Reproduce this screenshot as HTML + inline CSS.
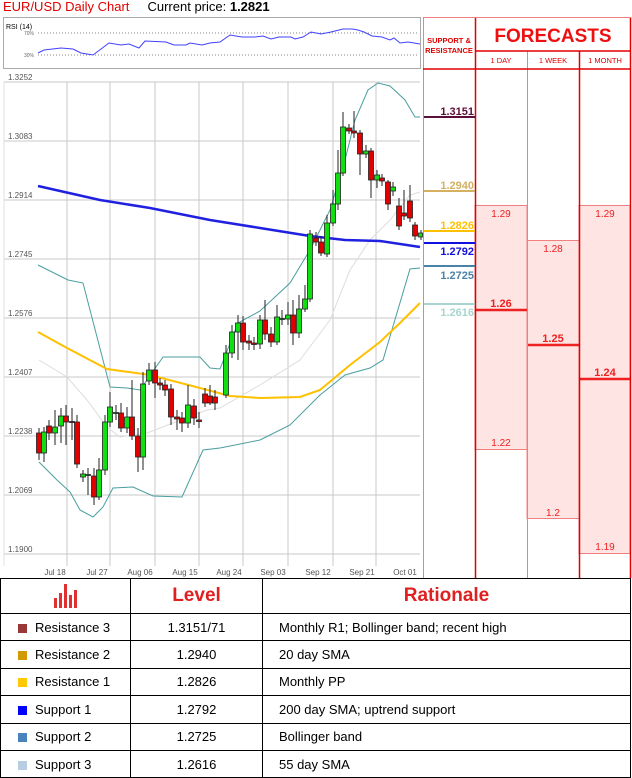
<!DOCTYPE html>
<html><head><meta charset="utf-8">
<style>
body{margin:0;width:632px;height:778px;background:#fff;font-family:"Liberation Sans",sans-serif;position:relative;overflow:hidden}
.t{position:absolute;top:-1px;left:3px;font-size:13px;white-space:nowrap}
table{position:absolute;left:0;top:578px;width:631px;border-collapse:collapse;font-size:13px;table-layout:fixed}
td{border:1.5px solid #000;height:27.4px;padding:0;box-sizing:border-box;white-space:nowrap}
td.h{height:35px;color:#e02020;font-weight:bold;font-size:19px;text-align:center}
.c1{padding-left:17px}
.c2{text-align:center}
.c3{padding-left:16px}
.sq{display:inline-block;width:9px;height:9px;margin-right:8px;vertical-align:-1px}
</style></head><body>
<div class="t"><span style="color:#e00000">EUR/USD Daily Chart</span>&nbsp;&nbsp;&nbsp;&nbsp; Current price: <b>1.2821</b></div>
<svg width="632" height="578" style="position:absolute;left:0;top:0" font-family="Liberation Sans, sans-serif">
<rect x="3.5" y="17.5" width="417" height="51" fill="#fff" stroke="#aaa"/>
<text x="6" y="29" font-size="7" fill="#000">RSI (14)</text>
<line x1="38" y1="33" x2="418" y2="33" stroke="#888" stroke-dasharray="1,2"/>
<line x1="38" y1="55" x2="418" y2="55" stroke="#888" stroke-dasharray="1,2"/>
<text x="24" y="35" font-size="5" fill="#666">70%</text>
<text x="24" y="57" font-size="5" fill="#666">30%</text>
<polyline fill="none" stroke="#4040ff" stroke-width="1" points="38,53 44,50 61,48 73,49 81,53 93,55 109,43 121,45 129,44 139,48 145,41 166,42 174,45 186,45 190,43 202,45 210,43 220,42 230,35 242,37 255,37 263,36 271,39 279,37 291,37 295,39 303,37 311,32 321,34 331,32 343,29 352,29 358,30 364,32 372,36 382,37 390,40 394,38 400,43 408,42 420,44"/>
<g stroke="#c8c8c8" stroke-width="1">
<line x1="4" y1="82" x2="420" y2="82"/><line x1="4" y1="141" x2="420" y2="141"/><line x1="4" y1="200" x2="420" y2="200"/><line x1="4" y1="259" x2="420" y2="259"/><line x1="4" y1="318" x2="420" y2="318"/><line x1="4" y1="377" x2="420" y2="377"/><line x1="4" y1="436" x2="420" y2="436"/><line x1="4" y1="495" x2="420" y2="495"/><line x1="4" y1="554" x2="420" y2="554"/>
<line x1="67" y1="82" x2="67" y2="566"/><line x1="110" y1="82" x2="110" y2="566"/><line x1="155" y1="82" x2="155" y2="566"/><line x1="199" y1="82" x2="199" y2="566"/><line x1="243" y1="82" x2="243" y2="566"/><line x1="288" y1="82" x2="288" y2="566"/><line x1="333" y1="82" x2="333" y2="566"/><line x1="376" y1="82" x2="376" y2="566"/>
<line x1="4" y1="82" x2="4" y2="566" stroke="#e0e0e0"/>
</g>
<g font-size="8" fill="#555">
<text x="8" y="80">1.3252</text><text x="8" y="139">1.3083</text><text x="8" y="198">1.2914</text><text x="8" y="257">1.2745</text><text x="8" y="316">1.2576</text><text x="8" y="375">1.2407</text><text x="8" y="434">1.2238</text><text x="8" y="493">1.2069</text><text x="8" y="552">1.1900</text>
</g>
<g font-size="8" fill="#555" text-anchor="middle">
<text x="55" y="575">Jul 18</text><text x="97" y="575">Jul 27</text><text x="140" y="575">Aug 06</text><text x="185" y="575">Aug 15</text><text x="229" y="575">Aug 24</text><text x="273" y="575">Sep 03</text><text x="318" y="575">Sep 12</text><text x="362" y="575">Sep 21</text><text x="405" y="575">Oct 01</text>
</g>
<polyline fill="none" stroke="#ddd" stroke-width="1" points="39,360 67,377 87,400 107,427 120,437 147,433 173,423 207,410 220,408 260,385 300,360 330,320 350,270 370,240 390,220 410,195 420,192"/>
<polyline fill="none" stroke="#4a9e9e" stroke-width="1" points="38,265 68,280 83,283 110,387 127,388 140,390 163,357 200,357 210,368 220,369 238,323 260,311 290,283 310,250 330,210 345,160 355,120 368,90 378,83 390,86 405,100 415,117 420,117"/>
<polyline fill="none" stroke="#4a9e9e" stroke-width="1" points="39,462 57,480 70,492 80,510 93,517 103,507 113,488 133,487 153,496 182,497 203,450 220,448 260,440 290,425 320,395 345,375 370,368 383,360 410,269 420,268"/>
<polyline fill="none" stroke="#ffc000" stroke-width="2" points="38,332 67,348 107,369 150,375 200,388 230,396 260,398 300,397 320,390 350,365 380,342 400,323 420,303"/>
<polyline fill="none" stroke="#2020e0" stroke-width="2.5" points="38,186 100,200 150,208 210,220 260,228 310,236 345,240 380,241 420,247"/>
<path stroke="#222" stroke-width="1" fill="none" d="M39 428V460M44 427V462M49 420V440M55 410V445M61 408V443M66 405V445M72 408V440M77 415V468M83 470V482M88 468V495M94 468V505M99 458V500M105 415V475M110 392V427M116 405V420M121 403V432M127 407V433M132 380V440M138 428V472M143 372V470M149 363V385M155 362V398M160 378V390M165 380V396M171 384V425M177 410V430M182 412V432M188 385V428M194 399V425M199 412V428M205 388V407M210 385V405M215 390V410M226 345V398M232 325V358M238 315V360M243 316V350M249 335V350M254 337V350M260 315V349M265 300V340M271 327V347M277 305V345M282 310V325M288 302V325M293 300V345M299 295V338M305 285V312M310 230V302M316 232V246M321 236V256M327 215V257M333 190V226M338 150V210M343 112V176M349 124V134M354 111V138M360 130V175M366 145V158M371 148V198M377 170V188M382 174V186M388 180V210M393 182V196M399 198V230M404 190V220M410 185V222M415 222V240M421 230V240"/>
<g stroke="#222" stroke-width="0.8">
<g fill="#e00000">
<rect x="36.5" y="433" width="5" height="20"/><rect x="46.5" y="426" width="5" height="7"/><rect x="63.5" y="416" width="5" height="6"/><rect x="69.5" y="421.5" width="5" height="1"/><rect x="74.5" y="422" width="5" height="42"/><rect x="91.5" y="476" width="5" height="21"/><rect x="118.5" y="413" width="5" height="15"/><rect x="129.5" y="417" width="5" height="19"/><rect x="135.5" y="436" width="5" height="21"/><rect x="152.5" y="370" width="5" height="13"/><rect x="157.5" y="383" width="5" height="2"/><rect x="162.5" y="385" width="5" height="5"/><rect x="168.5" y="389" width="5" height="28"/><rect x="174.5" y="417" width="5" height="2"/><rect x="179.5" y="418" width="5" height="5"/><rect x="191.5" y="406" width="5" height="12"/><rect x="196.5" y="420" width="5" height="1.5"/><rect x="202.5" y="394" width="5" height="9"/><rect x="207.5" y="396" width="5" height="7"/><rect x="212.5" y="397" width="5" height="6"/>
<rect x="240.5" y="323" width="5" height="19"/><rect x="246.5" y="341" width="5" height="2"/><rect x="251.5" y="343" width="5" height="1.5"/><rect x="262.5" y="320" width="5" height="14"/><rect x="268.5" y="334" width="5" height="8"/><rect x="290.5" y="315" width="5" height="18"/><rect x="313.5" y="238" width="5" height="4"/><rect x="318.5" y="242" width="5" height="11"/><rect x="346.5" y="128" width="5" height="3"/><rect x="351.5" y="131" width="5" height="2"/><rect x="357.5" y="133" width="5" height="21"/><rect x="368.5" y="151" width="5" height="29"/><rect x="379.5" y="178" width="5" height="3"/><rect x="385.5" y="182" width="5" height="22"/><rect x="396.5" y="206" width="5" height="20"/><rect x="401.5" y="213" width="5" height="3"/><rect x="407.5" y="201" width="5" height="17"/><rect x="412.5" y="225" width="5" height="11"/>
</g>
<g fill="#10e010">
<rect x="41.5" y="432" width="5" height="21"/><rect x="52.5" y="427" width="5" height="6"/><rect x="58.5" y="416" width="5" height="10"/><rect x="80.5" y="474" width="5" height="3"/><rect x="85.5" y="474.5" width="5" height="1"/><rect x="96.5" y="470" width="5" height="27"/><rect x="102.5" y="422" width="5" height="48"/><rect x="107.5" y="407" width="5" height="15"/><rect x="113.5" y="412.5" width="5" height="1"/><rect x="124.5" y="417" width="5" height="11"/><rect x="140.5" y="384" width="5" height="73"/><rect x="146.5" y="370" width="5" height="11"/><rect x="185.5" y="405" width="5" height="18"/>
<rect x="223.5" y="353" width="5" height="42"/><rect x="229.5" y="332" width="5" height="21"/><rect x="235.5" y="323" width="5" height="9"/><rect x="257.5" y="320" width="5" height="24"/><rect x="274.5" y="317" width="5" height="25"/><rect x="279.5" y="318.5" width="5" height="1"/><rect x="285.5" y="315" width="5" height="4"/><rect x="296.5" y="309" width="5" height="24"/><rect x="302.5" y="299" width="5" height="10"/><rect x="307.5" y="234" width="5" height="65"/><rect x="324.5" y="223" width="5" height="31"/><rect x="330.5" y="204" width="5" height="19"/><rect x="335.5" y="173" width="5" height="31"/><rect x="340.5" y="127" width="5" height="46"/><rect x="363.5" y="151" width="5" height="3"/><rect x="374.5" y="175" width="5" height="5"/><rect x="390.5" y="187" width="5" height="4"/><rect x="418.5" y="233" width="4" height="4"/>
</g></g>
<g fill="#ffe4e4" stroke="#f08080" stroke-width="1">
<rect x="475" y="205.5" width="52" height="244"/>
<rect x="527" y="240.5" width="52" height="278"/>
<rect x="579" y="205.5" width="51" height="348"/>
</g>
<g stroke="#ee2020" stroke-width="2.5">
<line x1="475" y1="310" x2="527" y2="310"/><line x1="527" y1="345" x2="579" y2="345"/><line x1="579" y1="379" x2="630" y2="379"/>
</g>
<g stroke="#f08080" stroke-width="1"><line x1="423.5" y1="17" x2="423.5" y2="578"/><line x1="527.5" y1="51" x2="527.5" y2="578"/></g>
<g stroke="#e00000" stroke-width="1.5"><line x1="475.5" y1="17" x2="475.5" y2="578"/><line x1="579.5" y1="51" x2="579.5" y2="578"/><line x1="630.5" y1="17" x2="630.5" y2="578"/>
<line x1="423" y1="17.5" x2="631" y2="17.5" stroke="#f08080" stroke-width="1"/>
<line x1="475" y1="51" x2="631" y2="51"/><line x1="423" y1="69" x2="631" y2="69"/></g>
<text x="449" y="43" font-size="7.5" fill="#e00000" font-weight="bold" text-anchor="middle">SUPPORT &amp;</text>
<text x="449" y="53" font-size="7.5" fill="#e00000" font-weight="bold" text-anchor="middle">RESISTANCE</text>
<text x="553" y="42" font-size="19" fill="#ee1010" font-weight="bold" text-anchor="middle">FORECASTS</text>
<g font-size="7.5" fill="#e00000" text-anchor="middle"><text x="501" y="63">1 DAY</text><text x="553" y="63">1 WEEK</text><text x="605" y="63">1 MONTH</text></g>
<g stroke-width="2"><line x1="424" y1="117" x2="475" y2="117" stroke="#5a1038"/><line x1="424" y1="191" x2="475" y2="191" stroke="#d4b060"/><line x1="424" y1="231" x2="475" y2="231" stroke="#ffc000"/><line x1="424" y1="243" x2="475" y2="243" stroke="#1010e0"/><line x1="424" y1="266" x2="475" y2="266" stroke="#4a82a8"/><line x1="424" y1="304" x2="475" y2="304" stroke="#a8d4d0"/></g>
<g font-size="11" text-anchor="end" font-weight="bold"><text x="474" y="115" fill="#5a1038">1.3151</text><text x="474" y="189" fill="#d4b060">1.2940</text><text x="474" y="229" fill="#ffc000">1.2826</text><text x="474" y="255" fill="#1010e0">1.2792</text><text x="474" y="279" fill="#4a82a8">1.2725</text><text x="474" y="316" fill="#a8d4d0">1.2616</text></g>
<g font-size="10" fill="#ee2020" text-anchor="middle"><text x="501" y="217">1.29</text><text x="501" y="446">1.22</text><text x="553" y="252">1.28</text><text x="553" y="516">1.2</text><text x="605" y="217">1.29</text><text x="605" y="550">1.19</text></g>
<g font-size="11" fill="#ee2020" text-anchor="middle" font-weight="bold"><text x="501" y="307">1.26</text><text x="553" y="342">1.25</text><text x="605" y="376">1.24</text></g>
</svg>
<table>
<colgroup><col style="width:130px"><col style="width:132px"><col></colgroup>
<tr><td class="h"><svg width="26" height="26" viewBox="0 0 26 26" style="vertical-align:middle"><g fill="#e03030"><rect x="1" y="15" width="3" height="10"/><rect x="6" y="10" width="3" height="15"/><rect x="11" y="1" width="3" height="24"/><rect x="16" y="12" width="3" height="13"/><rect x="21" y="7" width="3" height="18"/></g></svg></td><td class="h">Level</td><td class="h">Rationale</td></tr>
<tr><td class="c1"><span class="sq" style="background:#9a3838"></span>Resistance 3</td><td class="c2">1.3151/71</td><td class="c3">Monthly R1; Bollinger band; recent high</td></tr>
<tr><td class="c1"><span class="sq" style="background:#d09a00"></span>Resistance 2</td><td class="c2">1.2940</td><td class="c3">20 day SMA</td></tr>
<tr><td class="c1"><span class="sq" style="background:#ffc800"></span>Resistance 1</td><td class="c2">1.2826</td><td class="c3">Monthly PP</td></tr>
<tr><td class="c1"><span class="sq" style="background:#0000ff"></span>Support 1</td><td class="c2">1.2792</td><td class="c3">200 day SMA; uptrend support</td></tr>
<tr><td class="c1"><span class="sq" style="background:#4a82c0"></span>Support 2</td><td class="c2">1.2725</td><td class="c3">Bollinger band</td></tr>
<tr><td class="c1"><span class="sq" style="background:#b8cce4"></span>Support 3</td><td class="c2">1.2616</td><td class="c3">55 day SMA</td></tr>
</table>
</body></html>
